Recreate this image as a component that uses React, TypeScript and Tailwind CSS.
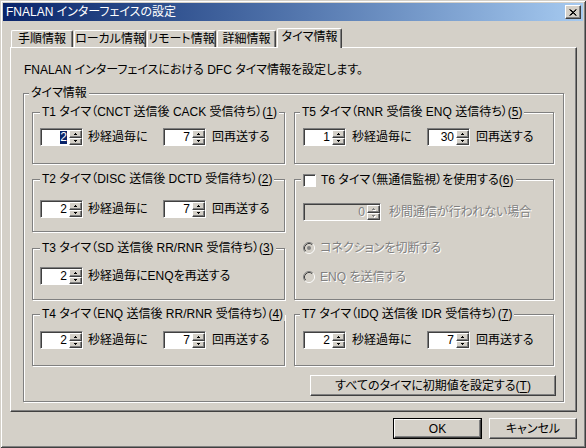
import React from 'react';

type SpinProps = { value: string; className?: string; selected?: boolean; disabled?: boolean };

const Arrow = ({ up, disabled }: { up?: boolean; disabled?: boolean }) => (
  <svg width="4" height="3" viewBox="0 0 4 3" className="block">
    {disabled && <path d={up ? 'M2 1h1v1h1v1H1V2h1z' : 'M1 1h3v1H3v1H2V2H1z'} fill="#fff" />}
    <path d={up ? 'M1 0h1v1h1v1H0V1h1z' : 'M0 0h3v1H2v1H1V1H0z'} fill={disabled ? '#808080' : '#000'} />
  </svg>
);

const UpDownButton = ({ up, disabled, className }: { up?: boolean; disabled?: boolean; className: string }) => (
  <div
    className={`flex items-center justify-center border border-t-white border-l-white border-r-[#404040] border-b-[#404040] bg-[#d4d0c8] pl-[1px] shadow-[inset_-1px_-1px_0_#808080] ${className}`}
  >
    <Arrow up={up} disabled={disabled} />
  </div>
);

const Spin = ({ value, className = 'w-[43px]', selected, disabled }: SpinProps) => (
  <div
    className={`flex h-[18px] shrink-0 border border-t-[#808080] border-l-[#808080] border-r-white border-b-white ${className}`}
  >
    <div className={`flex flex-1 pl-[1px] pt-[1px] shadow-[inset_1px_1px_0_#404040] ${disabled ? 'bg-[#d4d0c8]' : 'bg-white'}`}>
      <div className={`flex flex-1 items-center justify-end pr-[2px] ${disabled ? 'text-[#808080] [text-shadow:1px_1px_0_#fff]' : ''}`}>
        <span className={`leading-[13px] ${selected ? 'bg-[#0a246a] text-white' : ''}`}>{value}</span>
      </div>
      <div className="flex w-[13px] flex-col">
        <UpDownButton up disabled={disabled} className="h-[8px]" />
        <UpDownButton disabled={disabled} className="h-[7px]" />
      </div>
    </div>
  </div>
);

const Group = ({
  label,
  className,
  labelClass,
  children,
}: {
  label: React.ReactNode;
  className: string;
  labelClass: string;
  children?: React.ReactNode;
}) => (
  <div className={`border border-[#808080] shadow-[inset_1px_1px_0_#fff,1px_1px_0_#fff] ${className}`}>
    <div className={`-mt-[8px] w-fit bg-[#d4d0c8] px-[2px] leading-[14px] whitespace-nowrap ${labelClass}`}>{label}</div>
    {children}
  </div>
);

const Key = ({ k }: { k: string }) => <span className="underline underline-offset-2">{k}</span>;

const RetryRow = ({ sec, times, gap, className, selected }: { sec: string; times: string; gap: string; className: string; selected?: boolean }) => (
  <div className={`flex items-center ${className}`}>
    <Spin value={sec} selected={selected} />
    <span className={`w-[75px] whitespace-nowrap ${gap}`}>秒経過毎に</span>
    <Spin value={times} />
    <span className="ml-[6px] whitespace-nowrap">回再送する</span>
  </div>
);

const Tab = ({ label, className, active }: { label: string; className: string; active?: boolean }) => (
  <div
    className={`flex justify-center rounded-t-[2px] border-t border-l border-r border-t-white border-l-white border-r-[#404040] bg-[#d4d0c8] shadow-[inset_-1px_0_0_#808080] whitespace-nowrap ${
      active ? 'relative z-10 -mb-[1px] h-[20px] items-start pt-[1px]' : 'h-[17px] items-center'
    } ${className}`}
  >
    {label}
  </div>
);

const Button = ({ children, className, primary }: { children: React.ReactNode; className: string; primary?: boolean }) =>
  primary ? (
    <div className={`border border-black ${className}`}>
      <div className="flex h-full items-center justify-center border border-t-white border-l-white border-r-[#404040] border-b-[#404040] shadow-[inset_-1px_-1px_0_#808080]">
        {children}
      </div>
    </div>
  ) : (
    <div
      className={`flex items-center justify-center border border-t-white border-l-white border-r-[#404040] border-b-[#404040] shadow-[inset_-1px_-1px_0_#808080] whitespace-nowrap ${className}`}
    >
      {children}
    </div>
  );

const Radio = ({ checked }: { checked?: boolean }) => (
  <svg width="12" height="12" viewBox="0 0 12 12" className="shrink-0">
    <circle cx="6" cy="6" r="4.5" fill="#d4d0c8" />
    <path d="M2.11 9.89A5.5 5.5 0 0 1 9.89 2.11" fill="none" stroke="#808080" />
    <path d="M9.89 2.11A5.5 5.5 0 0 1 2.11 9.89" fill="none" stroke="#fff" />
    <path d="M2.82 9.18A4.5 4.5 0 0 1 9.18 2.82" fill="none" stroke="#404040" />
    <path d="M9.18 2.82A4.5 4.5 0 0 1 2.82 9.18" fill="none" stroke="#d4d0c8" />
    {checked && <circle cx="6" cy="6" r="2" fill="#808080" />}
  </svg>
);

const disabledText = 'text-[#808080] [text-shadow:1px_1px_0_#fff] whitespace-nowrap';

export default function App() {
  return (
    <div className="h-[448px] w-[586px] bg-[#d4d0c8] p-[3px] font-['Liberation_Sans','Noto_Sans_CJK_JP',sans-serif] text-[12px] leading-[14px] text-black [font-feature-settings:'palt'] shadow-[inset_1px_1px_0_#d4d0c8,inset_-1px_-1px_0_#404040,inset_2px_2px_0_#fff,inset_-2px_-2px_0_#808080]">
      <div className="flex h-[18px] items-center justify-between bg-linear-to-r from-[#0a246a] to-[#a6caf0] pl-[3px] pr-[2px]">
        <span className="text-white">FNALAN インターフェイスの設定</span>
        <div className="flex h-[14px] w-[16px] items-center justify-center border border-t-white border-l-white border-r-[#404040] border-b-[#404040] bg-[#d4d0c8] shadow-[inset_-1px_-1px_0_#808080]">
          <svg width="8" height="7" viewBox="0 0 8 7">
            <path d="M0.5 0.5L7 6.5M1.5 0.5L7.5 6.5M7 0.5L0.5 6.5M7.5 0.5L1.5 6.5" stroke="#000" strokeWidth="1" />
          </svg>
        </div>
      </div>

      <div className="pl-[7px] pr-[6px]">
        <div className="mt-[7px] flex h-[19px] items-end">
          <Tab label="手順情報" className="ml-[1px] w-[62px]" />
          <Tab label="ローカル情報" className="ml-[1px] w-[72px]" />
          <Tab label="リモート情報" className="ml-[1px] w-[69px]" />
          <Tab label="詳細情報" className="ml-[1px] w-[59px]" />
          <Tab label="タイマ情報" className="ml-[1px] w-[65px]" active />
        </div>

        <div className="h-[365px] border border-t-white border-l-white border-r-[#404040] border-b-[#404040] shadow-[inset_-1px_-1px_0_#808080]">
          <p className="ml-[13px] mt-[15px] whitespace-nowrap">FNALAN インターフェイスにおける DFC タイマ情報を設定します。</p>

          <Group label="タイマ情報" className="ml-[12px] mt-[16px] h-[309px] w-[541px]" labelClass="ml-[5px]">
            <div className="ml-[8px] mt-[12px] flex gap-[9px]">
              <div className="flex w-[253px] flex-col">
                <Group
                  label={<>T1 タイマ（CNCT 送信後 CACK 受信待ち）(<Key k="1" />)</>}
                  className="h-[52px]"
                  labelClass="ml-[7px]"
                >
                  <RetryRow sec="2" times="7" selected gap="ml-[5px]" className="ml-[7px] mt-[9px]" />
                </Group>
                <Group
                  label={<>T2 タイマ（DISC 送信後 DCTD 受信待ち）(<Key k="2" />)</>}
                  className="mt-[15px] h-[53px]"
                  labelClass="ml-[7px]"
                >
                  <RetryRow sec="2" times="7" gap="ml-[5px]" className="ml-[7px] mt-[14px]" />
                </Group>
                <Group
                  label={<>T3 タイマ（SD 送信後 RR/RNR 受信待ち）(<Key k="3" />)</>}
                  className="mt-[16px] h-[52px]"
                  labelClass="ml-[7px]"
                >
                  <div className="ml-[7px] mt-[12px] flex items-center">
                    <Spin value="2" />
                    <span className="ml-[5px] whitespace-nowrap">秒経過毎にENQを再送する</span>
                  </div>
                </Group>
                <Group
                  label={<>T4 タイマ（ENQ 送信後 RR/RNR 受信待ち）(<Key k="4" />)</>}
                  className="mt-[14px] h-[52px]"
                  labelClass="ml-[7px]"
                >
                  <RetryRow sec="2" times="7" gap="ml-[5px]" className="ml-[7px] mt-[10px]" />
                </Group>
              </div>

              <div className="flex w-[260px] flex-col">
                <Group
                  label={<>T5 タイマ（RNR 受信後 ENQ 送信待ち）(<Key k="5" />)</>}
                  className="h-[52px]"
                  labelClass="ml-[5px]"
                >
                  <RetryRow sec="1" times="30" gap="ml-[6px]" className="ml-[8px] mt-[9px]" />
                </Group>

                <div className="mt-[15px] h-[121px] border border-[#808080] shadow-[inset_1px_1px_0_#fff,1px_1px_0_#fff]">
                  <div className="-mt-[7px] ml-[6px] flex h-[14px] w-fit items-center bg-[#d4d0c8] px-[2px]">
                    <div className="h-[13px] w-[13px] shrink-0 border border-t-[#808080] border-l-[#808080] border-r-white border-b-white bg-white shadow-[inset_1px_1px_0_#404040]" />
                    <span className="ml-[5px] whitespace-nowrap">
                      T6 タイマ（無通信監視）を使用する(<Key k="6" />)
                    </span>
                  </div>
                  <div className="ml-[8px] mt-[16px] flex items-center">
                    <Spin value="0" className="w-[78px]" disabled />
                    <span className={`ml-[8px] ${disabledText}`}>秒間通信が行われない場合</span>
                  </div>
                  <div className="ml-[8px] mt-[20px] flex h-[14px] items-center">
                    <Radio checked />
                    <span className={`ml-[5px] ${disabledText}`}>コネクションを切断する</span>
                  </div>
                  <div className="ml-[8px] mt-[15px] flex h-[14px] items-center">
                    <Radio />
                    <span className={`ml-[5px] ${disabledText}`}>ENQ を送信する</span>
                  </div>
                </div>

                <Group
                  label={<>T7 タイマ（IDQ 送信後 IDR 受信待ち）(<Key k="7" />)</>}
                  className="mt-[14px] h-[52px]"
                  labelClass="ml-[5px]"
                >
                  <RetryRow sec="2" times="7" gap="ml-[6px]" className="ml-[8px] mt-[10px]" />
                </Group>
              </div>
            </div>

            <Button className="ml-[286px] mt-[9px] h-[21px] w-[246px]">
              <span>
                すべてのタイマに初期値を設定する(<Key k="T" />)
              </span>
            </Button>
          </Group>
        </div>

        <div className="mt-[6px] flex justify-end gap-[7px]">
          <Button primary className="h-[21px] w-[89px]">
            OK
          </Button>
          <Button className="h-[21px] w-[88px]">キャンセル</Button>
        </div>
      </div>
    </div>
  );
}
